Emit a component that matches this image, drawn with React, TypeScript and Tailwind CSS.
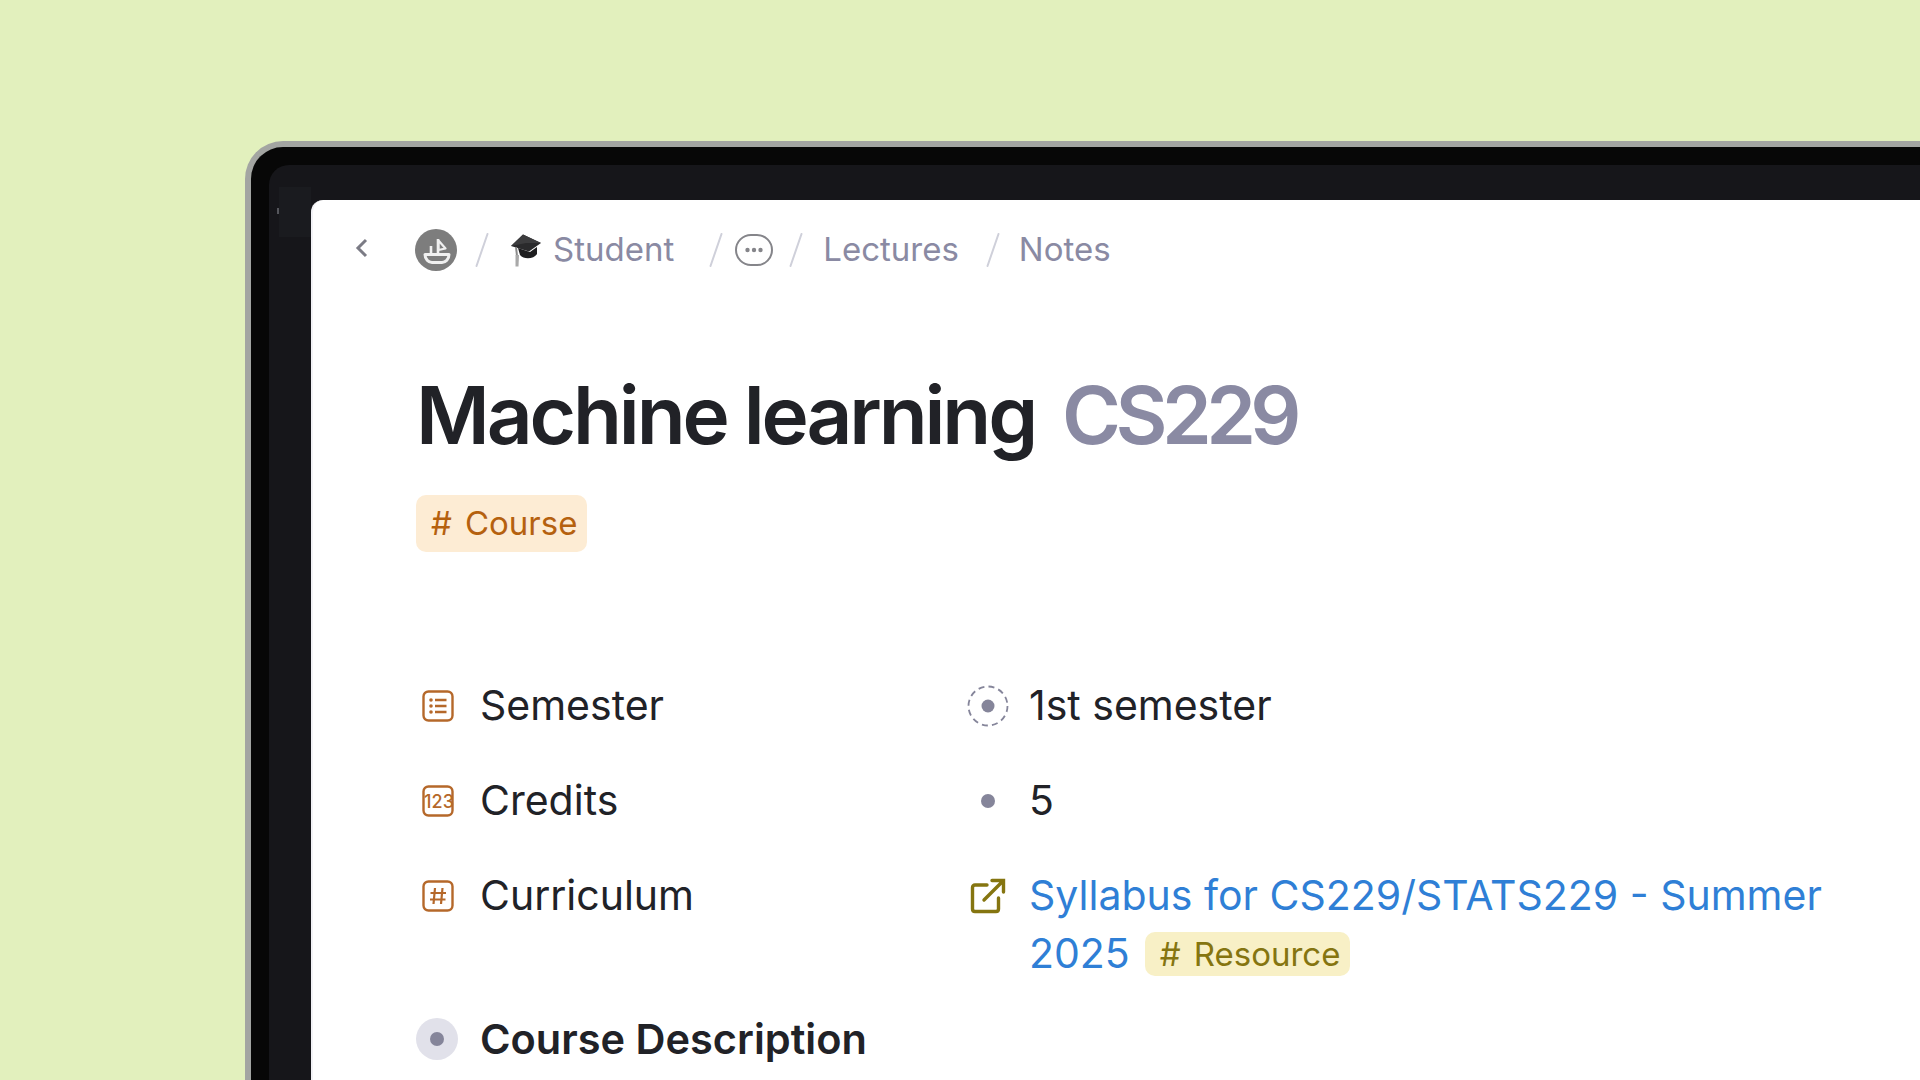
import React from "react";

const FONT = { fontFamily: "Inter, 'Liberation Sans', sans-serif" };

function Slash() {
  return (
    <svg width="14" height="34" viewBox="0 0 14 34" className="shrink-0">
      <path d="M12.5 1 L1.5 33" stroke="#cfd0da" strokeWidth="2" strokeLinecap="round" />
    </svg>
  );
}

function Logo() {
  return (
    <svg width="42" height="42" viewBox="0 0 42 42" className="shrink-0">
      <circle cx="21" cy="21" r="21" fill="#7d7d7d" />
      <path d="M23 10 V25" stroke="#f0f0f0" strokeWidth="2.6" fill="none" />
      <path d="M23.5 11.5 L30.5 19.5 L23.5 21 Z" stroke="#f0f0f0" strokeWidth="2.2" fill="none" strokeLinejoin="round" />
      <path d="M16 17 V24" stroke="#f0f0f0" strokeWidth="2.6" fill="none" />
      <path d="M10 25.5 H34 C34 30 30.5 33.5 27 33.5 H17 C13.5 33.5 10 30 10 25.5 Z" stroke="#f0f0f0" strokeWidth="3" fill="none" strokeLinejoin="round" />
    </svg>
  );
}

function Cap() {
  return (
    <svg width="32" height="33" viewBox="0 0 32 33" className="shrink-0">
      <path d="M8 14 L20 18 L27 13 V20 C24 25 14 26 10 21 Z" fill="#1d1d1f" />
      <path d="M13 0.5 L31 9 L19 17.5 L1 12 Z" fill="#2a2a2c" />
      <path d="M13 0.5 L31 9 L16 9 L1 12 Z" fill="#3c3c3e" />
      <path d="M6 13 L7 22" stroke="#8a8a8a" strokeWidth="2" />
      <path d="M5.5 21 H9 L8.5 32.5 H5.5 Z" fill="#a9a9a9" />
    </svg>
  );
}

function Ellipsis() {
  return (
    <svg width="38" height="32" viewBox="0 0 38 32" className="shrink-0">
      <rect x="1" y="1" width="36" height="30" rx="15" fill="none" stroke="#85858a" strokeWidth="2" />
      <circle cx="12.5" cy="16" r="2.2" fill="#85858a" />
      <circle cx="19" cy="16" r="2.2" fill="#85858a" />
      <circle cx="25.5" cy="16" r="2.2" fill="#85858a" />
    </svg>
  );
}

function BoxIcon({ children }: { children: React.ReactNode }) {
  return (
    <svg width="32" height="32" viewBox="0 0 32 32" className="shrink-0">
      <rect x="1.5" y="1.5" width="29" height="29" rx="5" fill="none" stroke="#b5682a" strokeWidth="2.4" />
      {children}
    </svg>
  );
}

function Row({
  icon,
  label,
  valueIcon,
  children,
}: {
  icon: React.ReactNode;
  label: string;
  valueIcon: React.ReactNode;
  children: React.ReactNode;
}) {
  return (
    <div className="flex items-start">
      <div className="flex w-[550px] shrink-0 items-center">
        <div className="flex h-[59px] w-[44px] shrink-0 items-center justify-center">{icon}</div>
        <span className="ml-[20px] text-[41px] leading-[59px] text-[#212227]">{label}</span>
      </div>
      <div className="flex h-[59px] w-[44px] shrink-0 items-center justify-center">{valueIcon}</div>
      <div className="ml-[19px] w-[810px] text-[41px] leading-[58px] text-[#212227]">{children}</div>
    </div>
  );
}

export default function App() {
  return (
    <div className="h-screen w-full overflow-hidden bg-[#e2f0bd] pl-[245px] pt-[141px]" style={FONT}>
      <div className="h-full rounded-tl-[38px] border-l-[6px] border-t-[6px] border-[#a3a5a2] bg-[#070707] pl-[18px] pt-[18px]">
        <div className="relative h-full rounded-tl-[20px] bg-[#16161a] pl-[42px] pt-[35px]">
          <div className="absolute left-[10px] top-[22px] h-[50px] w-[32px] bg-[#1a1b1f]" />
          <div className="absolute left-[8px] top-[43px] h-[6px] w-[2px] bg-[#55565c]" />
          <div className="relative h-full rounded-tl-[12px] border-l-2 border-[#f2f2f6] bg-white">
            <div className="flex h-[100px] items-center pl-[41px] text-[33px] text-[#8a8aa3]">
              <svg width="16" height="22" viewBox="0 0 16 22" className="shrink-0 -translate-y-[2px]">
                <path d="M12 3 L4 11 L12 19" fill="none" stroke="#7b7b85" strokeWidth="3" />
              </svg>
              <div className="ml-[45px] flex items-center">
                <Logo />
                <div className="ml-[18px]"><Slash /></div>
                <div className="ml-[21px]"><Cap /></div>
                <span className="ml-[11px] whitespace-nowrap">Student</span>
                <div className="ml-[35px]"><Slash /></div>
                <div className="ml-[12px]"><Ellipsis /></div>
                <div className="ml-[16px]"><Slash /></div>
                <span className="ml-[20px]">Lectures</span>
                <div className="ml-[27px]"><Slash /></div>
                <span className="ml-[19px]">Notes</span>
              </div>
            </div>
            <div className="pl-[103px]">
              <div className="mt-[70px] flex items-baseline whitespace-nowrap text-[80px] font-semibold leading-[90px]">
                <span className="tracking-[-0.039em] text-[#212227]">Machine learning</span>
                <span className="ml-[27px] tracking-[-0.07em] text-[#8a8aa3]">CS229</span>
              </div>
              <div className="mt-[35px] flex h-[57px] w-[171px] items-center gap-[13px] rounded-[10px] bg-[#fdecd4] pl-[15px] text-[33px] text-[#b5610f]">
                <span>#</span>
                <span>Course</span>
              </div>
              <div className="mt-[124px] flex flex-col gap-[36px]">
                <Row
                  label="Semester"
                  icon={
                    <BoxIcon>
                      <circle cx="9" cy="10" r="1.8" fill="#b5682a" />
                      <circle cx="9" cy="16" r="1.8" fill="#b5682a" />
                      <circle cx="9" cy="22" r="1.8" fill="#b5682a" />
                      <path d="M13 10 H24.5 M13 16 H24.5 M13 22 H24.5" stroke="#b5682a" strokeWidth="2.6" />
                    </BoxIcon>
                  }
                  valueIcon={
                    <svg width="42" height="42" viewBox="0 0 42 42">
                      <circle cx="21" cy="21" r="19.5" fill="none" stroke="#85859a" strokeWidth="1.8" strokeDasharray="6 4.2" />
                      <circle cx="21" cy="21" r="6.5" fill="#85859a" />
                    </svg>
                  }
                >
                  1st semester
                </Row>
                <Row
                  label="Credits"
                  icon={
                    <BoxIcon>
                      <text x="17" y="22.5" textAnchor="middle" fontSize="18" fontWeight="500" fill="#b5682a" style={FONT}>
                        123
                      </text>
                    </BoxIcon>
                  }
                  valueIcon={<div className="size-[14px] rounded-full bg-[#85859a]" />}
                >
                  5
                </Row>
                <Row
                  label="Curriculum"
                  icon={
                    <BoxIcon>
                      <path d="M13 8 L11.5 24 M20.5 8 L19 24 M8.5 13 H24 M8 19.5 H23.5" stroke="#b5682a" strokeWidth="2.2" fill="none" />
                    </BoxIcon>
                  }
                  valueIcon={
                    <svg width="36" height="36" viewBox="0 0 36 36">
                      <path d="M17 7 H5 C3.5 7 2.5 8 2.5 9.5 V31 C2.5 32.5 3.5 33.5 5 33.5 H26 C27.5 33.5 28.5 32.5 28.5 31 V20" fill="none" stroke="#857510" strokeWidth="3.4" strokeLinecap="round" />
                      <path d="M14 22 L33 3 M22 2.5 H33.5 V14" fill="none" stroke="#857510" strokeWidth="3.4" strokeLinecap="round" />
                    </svg>
                  }
                >
                  <span className="text-[#2f7fd6]">Syllabus for CS229/STATS229 - Summer</span>{" "}
                  <span className="text-[#2f7fd6]">2025</span>
                  <span className="ml-[15px] inline-flex h-[44px] items-center gap-[13px] rounded-[10px] bg-[#f8f0c6] pl-[15px] pr-[10px] align-[2px] text-[33px] text-[#857510]">
                    <span>#</span>
                    <span>Resource</span>
                  </span>
                </Row>
              </div>
              <div className="mt-[26px] flex items-center">
                <div className="flex size-[42px] shrink-0 items-center justify-center rounded-full bg-[#e1e1ea]">
                  <div className="size-[14px] rounded-full bg-[#85859a]" />
                </div>
                <span className="ml-[22px] text-[41.5px] font-semibold text-[#212227]">Course Description</span>
              </div>
            </div>
          </div>
        </div>
      </div>
    </div>
  );
}
